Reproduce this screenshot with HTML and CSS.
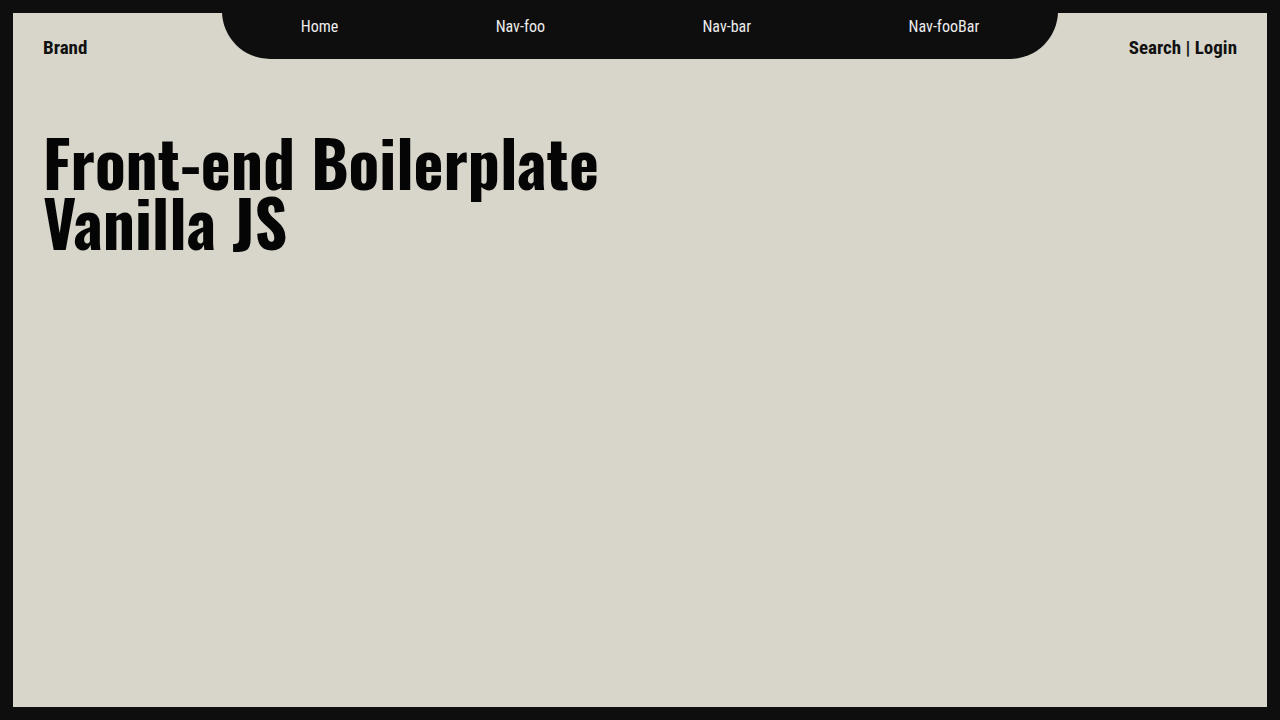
FILE: index.html
```html
<!DOCTYPE html>
<html lang="en">
<head>
<meta charset="utf-8">
<title>Front-end Boilerplate</title>
<link rel="stylesheet" href="styles.css">
</head>
<body>
<div class="frame">
  <header class="header">
    <a class="brand" href="#">Brand</a>
    <nav class="nav">
      <a href="#">Home</a>
      <a href="#">Nav-foo</a>
      <a href="#">Nav-bar</a>
      <a href="#">Nav-fooBar</a>
    </nav>
    <div class="actions"><a href="#">Search</a> | <a href="#">Login</a></div>
  </header>
  <main class="main">
    <h1 class="title">Front-end Boilerplate<br>Vanilla JS</h1>
  </main>
</div>
</body>
</html>
```
FILE: styles.css
```css
* { box-sizing: border-box; }
html, body { margin: 0; height: 100%; }
body {
  background: #0e0e0e;
  padding: 13px;
  font-family: "Roboto Condensed", "Roboto", "Liberation Sans", sans-serif;
}
a { color: inherit; text-decoration: none; }
.frame {
  background: #d8d6cb;
  height: 100%;
  padding: 0 30px;
}
.header {
  display: grid;
  grid-template-columns: 1fr auto 1fr;
  align-items: start;
  height: 46px;
}
.brand, .actions {
  font-size: 19px;
  font-weight: 700;
  color: #111;
  margin-top: 24px;
  line-height: 22px;
}
.actions { justify-self: end; }
.nav {
  margin-top: -13px;
  width: 836px;
  height: 59px;
  background: #0e0e0e;
  border-radius: 0 0 48px 48px;
  display: flex;
  justify-content: space-around;
  align-items: flex-start;
  padding-top: 17px;
  font-size: 16px;
  line-height: 19px;
  color: #ececec;
}
.main { padding-top: 72px; }
.title {
  margin: 0;
  font-family: "Oswald", "Roboto Condensed", "Liberation Sans Narrow", sans-serif;
  font-weight: 700;
  font-size: 63.6px;
  line-height: 60px;
  color: #050505;
}
```
